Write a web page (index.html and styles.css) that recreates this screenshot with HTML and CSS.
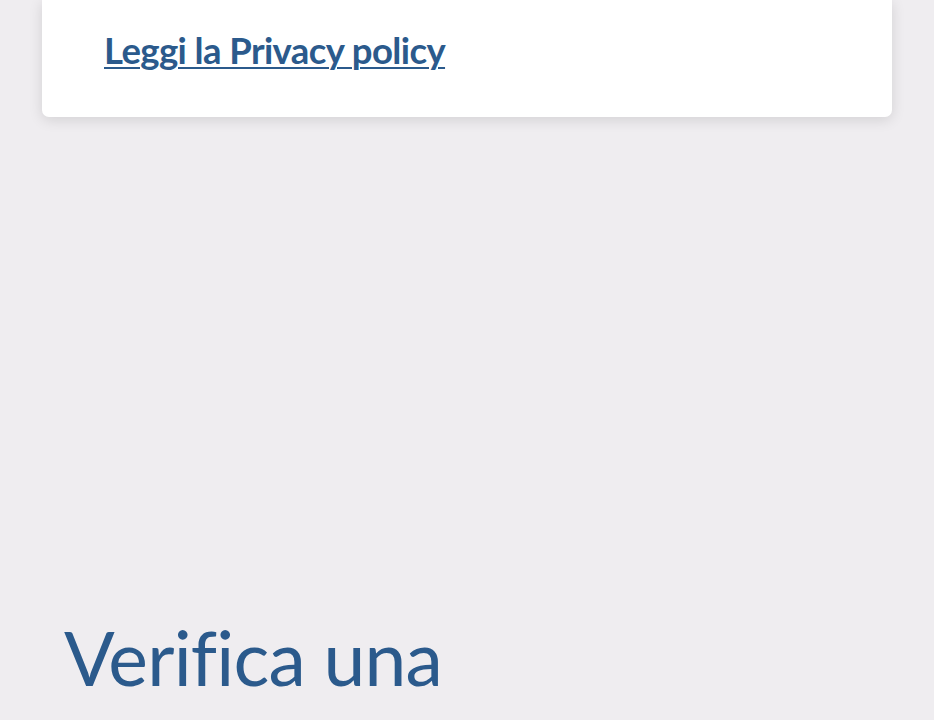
FILE: index.html
```html
<!DOCTYPE html>
<html lang="it">
<head>
<meta charset="utf-8">
<link rel="stylesheet" href="styles.css">
</head>
<body>
<div class="page">
  <div class="card">
    <a class="privacy-link" href="#">Leggi la Privacy policy</a>
  </div>
  <h1 class="title">Verifica una</h1>
</div>
</body>
</html>
```
FILE: styles.css
```css
html, body {
  margin: 0;
  padding: 0;
  background: #efedf0;
  height: 100%;
  overflow: hidden;
}
.page {
  display: flex;
  flex-direction: column;
  padding: 0 42px;
}
.card {
  background: #ffffff;
  border-radius: 0 0 7px 7px;
  box-shadow: 0 3px 14px rgba(0, 0, 0, 0.12);
  height: 117px;
  box-sizing: border-box;
  padding: 28px 62px 0;
}
.privacy-link {
  font-family: Lato, "Noto Sans", sans-serif;
  font-weight: 700;
  font-size: 36.5px;
  letter-spacing: -0.6px;
  color: #2b5a8c;
  text-decoration: underline;
  text-decoration-thickness: 2px;
  text-underline-offset: 3px;
  line-height: 44px;
}
.title {
  font-family: Lato, "Noto Sans", sans-serif;
  font-weight: 400;
  font-size: 75px;
  letter-spacing: -0.8px;
  color: #2b5a8c;
  margin: 490px 0 0 22px;
  line-height: 100px;
}
```
